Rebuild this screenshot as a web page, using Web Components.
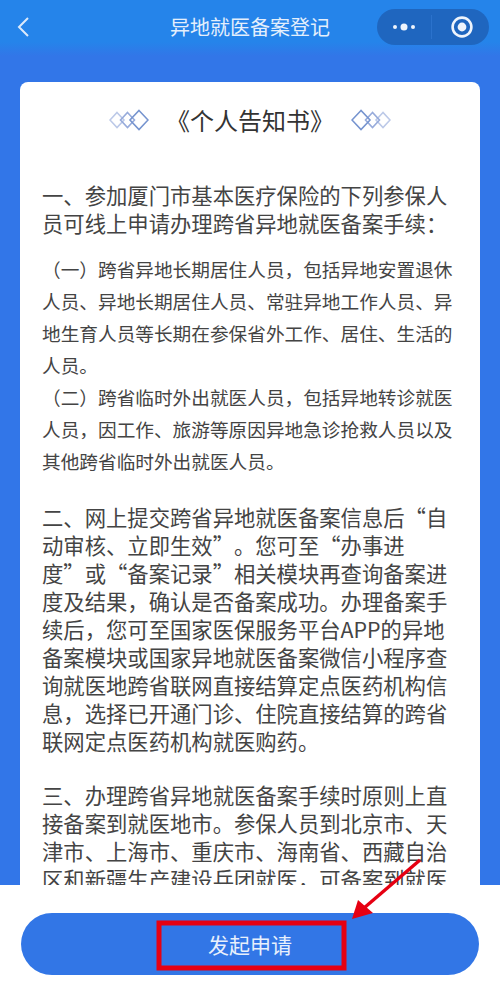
<!DOCTYPE html>
<html lang="zh-CN">
<head>
<meta charset="utf-8">
<title>异地就医备案登记</title>
<style>
  html, body { margin: 0; padding: 0; }
  body { font-family: "Noto Sans CJK SC", "Noto Sans", sans-serif; text-spacing-trim: space-all; text-autospace: no-autospace; }
</style>
</head>
<body>
<app-page>
  <nav-bar slot="nav">异地就医备案登记</nav-bar>
  <notice-card slot="content">
    <notice-title slot="title">《个人告知书》</notice-title>
    <notice-section>
      <notice-text>一、参加厦门市基本医疗保险的下列参保人员可线上申请办理跨省异地就医备案手续：</notice-text>
      <notice-text small spaced>（一）跨省异地长期居住人员，包括异地安置退休人员、异地长期居住人员、常驻异地工作人员、异地生育人员等长期在参保省外工作、居住、生活的人员。</notice-text>
      <notice-text small>（二）跨省临时外出就医人员，包括异地转诊就医人员，因工作、旅游等原因异地急诊抢救人员以及其他跨省临时外出就医人员。</notice-text>
    </notice-section>
    <notice-section>
      <notice-text>二、网上提交跨省异地就医备案信息后“自动审核、立即生效”。您可至“办事进<br>度”或“备案记录”相关模块再查询备案进度及结果，确认是否备案成功。办理备案手续后，您可至国家医保服务平台APP的异地备案模块或国家异地就医备案微信小程序查询就医地跨省联网直接结算定点医药机构信息，选择已开通门诊、住院直接结算的跨省联网定点医药机构就医购药。</notice-text>
    </notice-section>
    <notice-section>
      <notice-text>三、办理跨省异地就医备案手续时原则上直接备案到就医地市。参保人员到北京市、天津市、上海市、重庆市、海南省、西藏自治区和新疆生产建设兵团就医，可备案到就医省份。</notice-text>
    </notice-section>
  </notice-card>
  <submit-bar slot="footer">发起申请</submit-bar>
  <red-marks slot="marks"></red-marks>
</app-page>

<script>
class AppPage extends HTMLElement {
  constructor () {
    super()
    this.shadow = this.attachShadow({ mode: 'open' })
  }

  connectedCallback () {
    this.shadow.innerHTML = `
      <style>
        :host {
          display: flex;
          flex-direction: column;
          position: relative;
          width: 500px;
          height: 987px;
          overflow: hidden;
          background: #3276e8;
        }
        .body {
          flex: 1;
          min-height: 0;
          overflow: hidden;
          padding: 26px 20px 0;
        }
      </style>
      <slot name="nav"></slot>
      <div class="body"><slot name="content"></slot></div>
      <slot name="footer"></slot>
      <slot name="marks"></slot>
    `
  }
}

class NavBar extends HTMLElement {
  constructor () {
    super()
    this.shadow = this.attachShadow({ mode: 'open' })
  }

  connectedCallback () {
    this.shadow.innerHTML = `
      <style>
        :host {
          display: grid;
          grid-template-columns: 112px 1fr 112px;
          align-items: center;
          box-sizing: border-box;
          height: 56px;
          padding: 9px 11px 11px;
          background: linear-gradient(#2584ea 0, #2584ea 42px, #3276e8 56px);
          color: #e4effc;
          font-size: 20px;
          line-height: 36px;
        }
        .back { display: flex; padding-left: 5px; }
        .title { text-align: center; }
      </style>
      <div class="back">
        <svg width="14" height="22" viewBox="0 0 14 22" fill="none" stroke="#dce9fb" stroke-width="2">
          <path d="M12 2 L3 11 L12 20"/>
        </svg>
      </div>
      <div class="title"><slot></slot></div>
      <wx-capsule></wx-capsule>
    `
  }
}

class WxCapsule extends HTMLElement {
  constructor () {
    super()
    this.shadow = this.attachShadow({ mode: 'open' })
  }

  connectedCallback () {
    this.shadow.innerHTML = `
      <style>
        :host {
          display: flex;
          align-items: center;
          width: 112px;
          height: 36px;
          border-radius: 18px;
          background: #1f66bf;
        }
        .cell { flex: 1; display: flex; justify-content: center; align-items: center; }
        .cell.right { padding-left: 3px; }
        .line { width: 1px; height: 24px; background: #2b72cc; }
      </style>
      <div class="cell">
        <svg width="24" height="10" viewBox="0 0 24 10" fill="#eef4fc">
          <circle cx="3" cy="5" r="2"/><circle cx="12" cy="5" r="3.5"/><circle cx="21" cy="5" r="2"/>
        </svg>
      </div>
      <div class="line"></div>
      <div class="cell right">
        <svg width="24" height="24" viewBox="0 0 24 24">
          <circle cx="12" cy="12" r="9.4" fill="none" stroke="#eef4fc" stroke-width="2.6"/>
          <circle cx="12" cy="12" r="4.4" fill="#eef4fc"/>
        </svg>
      </div>
    `
  }
}

class NoticeCard extends HTMLElement {
  constructor () {
    super()
    this.shadow = this.attachShadow({ mode: 'open' })
  }

  connectedCallback () {
    this.shadow.innerHTML = `
      <style>
        :host {
          display: flex;
          flex-direction: column;
          gap: 26px;
          padding: 18px 27px 40px 22px;
          border-radius: 8px;
          background: #fff;
        }
        .head { margin-bottom: 15px; }
      </style>
      <div class="head"><slot name="title"></slot></div>
      <slot></slot>
    `
  }
}

class NoticeTitle extends HTMLElement {
  constructor () {
    super()
    this.shadow = this.attachShadow({ mode: 'open' })
  }

  connectedCallback () {
    this.shadow.innerHTML = `
      <style>
        :host {
          display: flex;
          justify-content: center;
          align-items: center;
          gap: 17px;
          margin-right: -5px;
          height: 40px;
          color: #333;
          font-size: 24px;
          line-height: 40px;
        }
      </style>
      <diamond-mark></diamond-mark>
      <span><slot></slot></span>
      <diamond-mark mirrored></diamond-mark>
    `
  }
}

class DiamondMark extends HTMLElement {
  constructor () {
    super()
    this.shadow = this.attachShadow({ mode: 'open' })
  }

  connectedCallback () {
    const flip = this.hasAttribute('mirrored') ? 'transform: scaleX(-1);' : ''
    this.shadow.innerHTML = `
      <style>
        :host { display: flex; width: 40px; height: 22px; ${flip} }
      </style>
      <svg width="40" height="22" viewBox="0 0 40 22" fill="none" stroke-width="1.6">
        <path d="M8 3.5 L15 11 L8 18.5 L1 11 Z" stroke="#bcc9e8"/>
        <path d="M18.5 3.5 L25.5 11 L18.5 18.5 L11.5 11 Z" stroke="#97abdb"/>
        <path d="M30 1.5 L39 11 L30 20.5 L21 11 Z" stroke="#7694cf"/>
      </svg>
    `
  }
}

class NoticeSection extends HTMLElement {
  constructor () {
    super()
    this.shadow = this.attachShadow({ mode: 'open' })
  }

  connectedCallback () {
    this.shadow.innerHTML = `
      <style>
        :host { display: block; }
      </style>
      <slot></slot>
    `
  }
}

class NoticeText extends HTMLElement {
  constructor () {
    super()
    this.shadow = this.attachShadow({ mode: 'open' })
  }

  connectedCallback () {
    this.shadow.innerHTML = `
      <style>
        :host {
          display: block;
          color: #444;
          font-size: 21.33px;
          line-height: 28px;
        }
        :host([small]) {
          font-size: 18.67px;
          line-height: 32px;
        }
        :host([spaced]) { margin-top: 16px; }
      </style>
      <slot></slot>
    `
  }
}

class SubmitBar extends HTMLElement {
  constructor () {
    super()
    this.shadow = this.attachShadow({ mode: 'open' })
  }

  connectedCallback () {
    this.shadow.innerHTML = `
      <style>
        :host {
          display: block;
          flex: none;
          box-sizing: border-box;
          height: 102px;
          padding: 28px 21px 12px;
          background: #fff;
        }
        button {
          display: block;
          width: 100%;
          height: 62px;
          border: 0;
          border-radius: 31px;
          background: #3276e6;
          color: #e8f0fc;
          font-family: inherit;
          font-size: 21px;
          padding: 0;
        }
      </style>
      <button><slot></slot></button>
    `
  }
}

// marcas rojas de la captura: recuadro y flecha encima del boton
class RedMarks extends HTMLElement {
  constructor () {
    super()
    this.shadow = this.attachShadow({ mode: 'open' })
  }

  connectedCallback () {
    this.shadow.innerHTML = `
      <style>
        :host { position: absolute; left: 0; top: 0; width: 500px; height: 987px; pointer-events: none; }
      </style>
      <svg width="500" height="987" viewBox="0 0 500 987" fill="none">
        <rect x="159" y="923" width="185" height="45" stroke="#e60012" stroke-width="5"/>
        <path d="M420 860 L364 908" stroke="#e60012" stroke-width="3.4"/>
        <path d="M352 919 L358 900 L373 913 Z" fill="#e60012"/>
      </svg>
    `
  }
}

customElements.define('app-page', AppPage)
customElements.define('nav-bar', NavBar)
customElements.define('wx-capsule', WxCapsule)
customElements.define('notice-card', NoticeCard)
customElements.define('notice-title', NoticeTitle)
customElements.define('diamond-mark', DiamondMark)
customElements.define('notice-section', NoticeSection)
customElements.define('notice-text', NoticeText)
customElements.define('submit-bar', SubmitBar)
customElements.define('red-marks', RedMarks)
</script>
</body>
</html>
